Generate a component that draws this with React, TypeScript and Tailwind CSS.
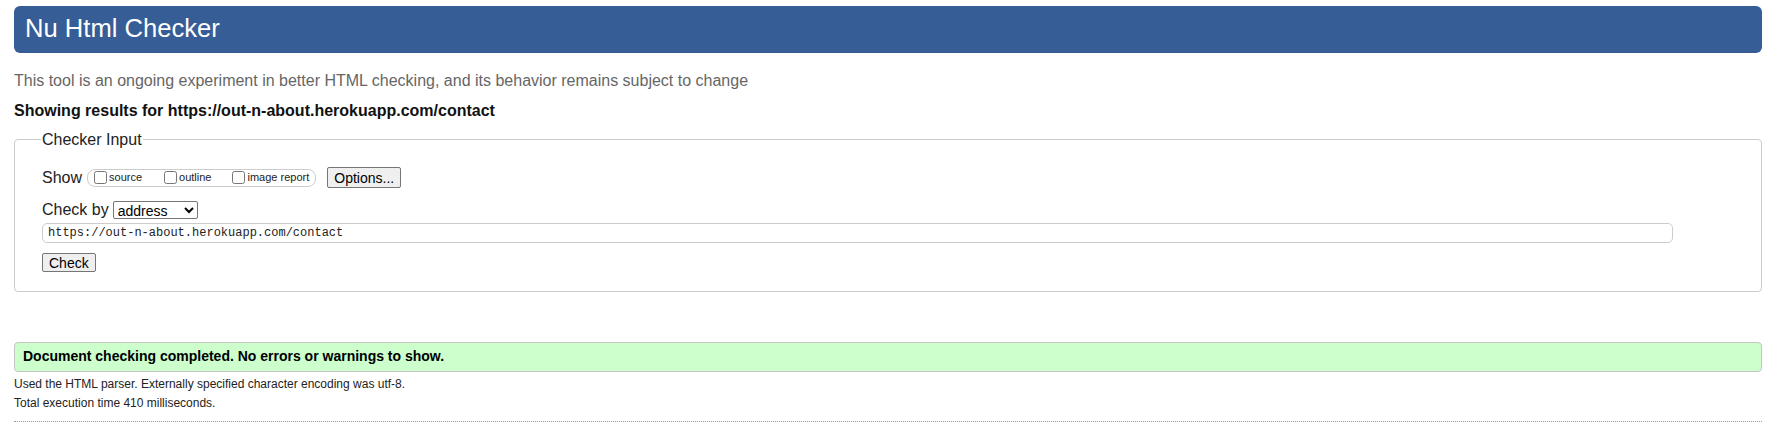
export default function App() {
  return (
    <div className="min-h-screen bg-white pt-[6px] pl-[14px] pr-[9px] font-['Liberation_Sans',Arial,sans-serif] text-black">
      <h1 className="h-[47px] bg-[#365d95] rounded-[6px] flex items-center pl-[11px] pb-[3px] text-[25.6px] text-white font-normal">
        Nu Html Checker
      </h1>

      <p className="mt-[18px] text-[16px] leading-[19px] text-[#666]">
        This tool is an ongoing experiment in better HTML checking, and its behavior remains subject to change
      </p>

      <p className="mt-[11px] text-[16px] leading-[19px] font-bold text-[#111]">
        Showing results for https://out-n-about.herokuapp.com/contact
      </p>

      <fieldset className="mt-[10px] border border-[#ccc] rounded-[4px] pl-[27px] pr-[27px] pt-[18px] pb-[16px]">
        <legend className="text-[16px] leading-[19px] text-[#222] px-[1px] -ml-[1px]">Checker Input</legend>

        <div className="flex items-center h-[21px]">
          <span className="text-[16px] text-[#222]">Show</span>
          <span className="ml-[5px] flex items-center h-[18px] border border-[#ccc] rounded-[8px] pl-[2px] pr-[6px]">
            <label className="flex items-center text-[11px] text-[#222]">
              <input type="checkbox" className="w-[13px] h-[13px] ml-[4px] mr-[2px]" />
              source
            </label>
            <label className="flex items-center text-[11px] text-[#222] ml-[18px]">
              <input type="checkbox" className="w-[13px] h-[13px] ml-[4px] mr-[2px]" />
              outline
            </label>
            <label className="flex items-center text-[11px] text-[#222] ml-[17px]">
              <input type="checkbox" className="w-[13px] h-[13px] ml-[4px] mr-[2px]" />
              image report
            </label>
          </span>
          <button className="ml-[11px] h-[21px] px-[6px] text-[14px] text-black bg-[#efefef] border border-[#767676] rounded-[2px]">
            Options...
          </button>
        </div>

        <div className="mt-[11px] flex items-center h-[21px]">
          <span className="text-[16px] text-[#222]">Check by</span>
          <select
            defaultValue="address"
            className="ml-[4px] h-[18px] w-[85px] text-[14px] leading-[16px] bg-white border border-[#767676] rounded-[2px] appearance-auto"
          >
            <option value="address">address</option>
            <option value="file">file upload</option>
            <option value="text">text input</option>
          </select>
        </div>

        <div className="mt-[3px] w-[1631px] h-[20px] border border-[#ccc] rounded-[5px] flex items-center pl-[5px] font-['Liberation_Mono','DejaVu_Sans_Mono',monospace] text-[12px] text-[#222]">
          https://out-n-about.herokuapp.com/contact
        </div>

        <button className="mt-[10px] h-[19px] px-[6px] text-[14px] leading-[16px] text-black bg-[#efefef] border border-[#767676] rounded-[2px]">
          Check
        </button>
      </fieldset>

      <div className="mt-[50px] h-[30px] bg-[#ccffcc] border border-[#c4c4c4] rounded-[4px] flex items-center pl-[8px] text-[14px] font-bold text-black">
        Document checking completed. No errors or warnings to show.
      </div>

      <p className="mt-[3px] text-[12px] leading-[19px] text-[#222]">
        Used the HTML parser. Externally specified character encoding was utf-8.
      </p>
      <p className="text-[12px] leading-[19px] text-[#222]">Total execution time 410 milliseconds.</p>

      <div className="mt-[8px] border-t border-dotted border-[#999]" />
    </div>
  );
}
